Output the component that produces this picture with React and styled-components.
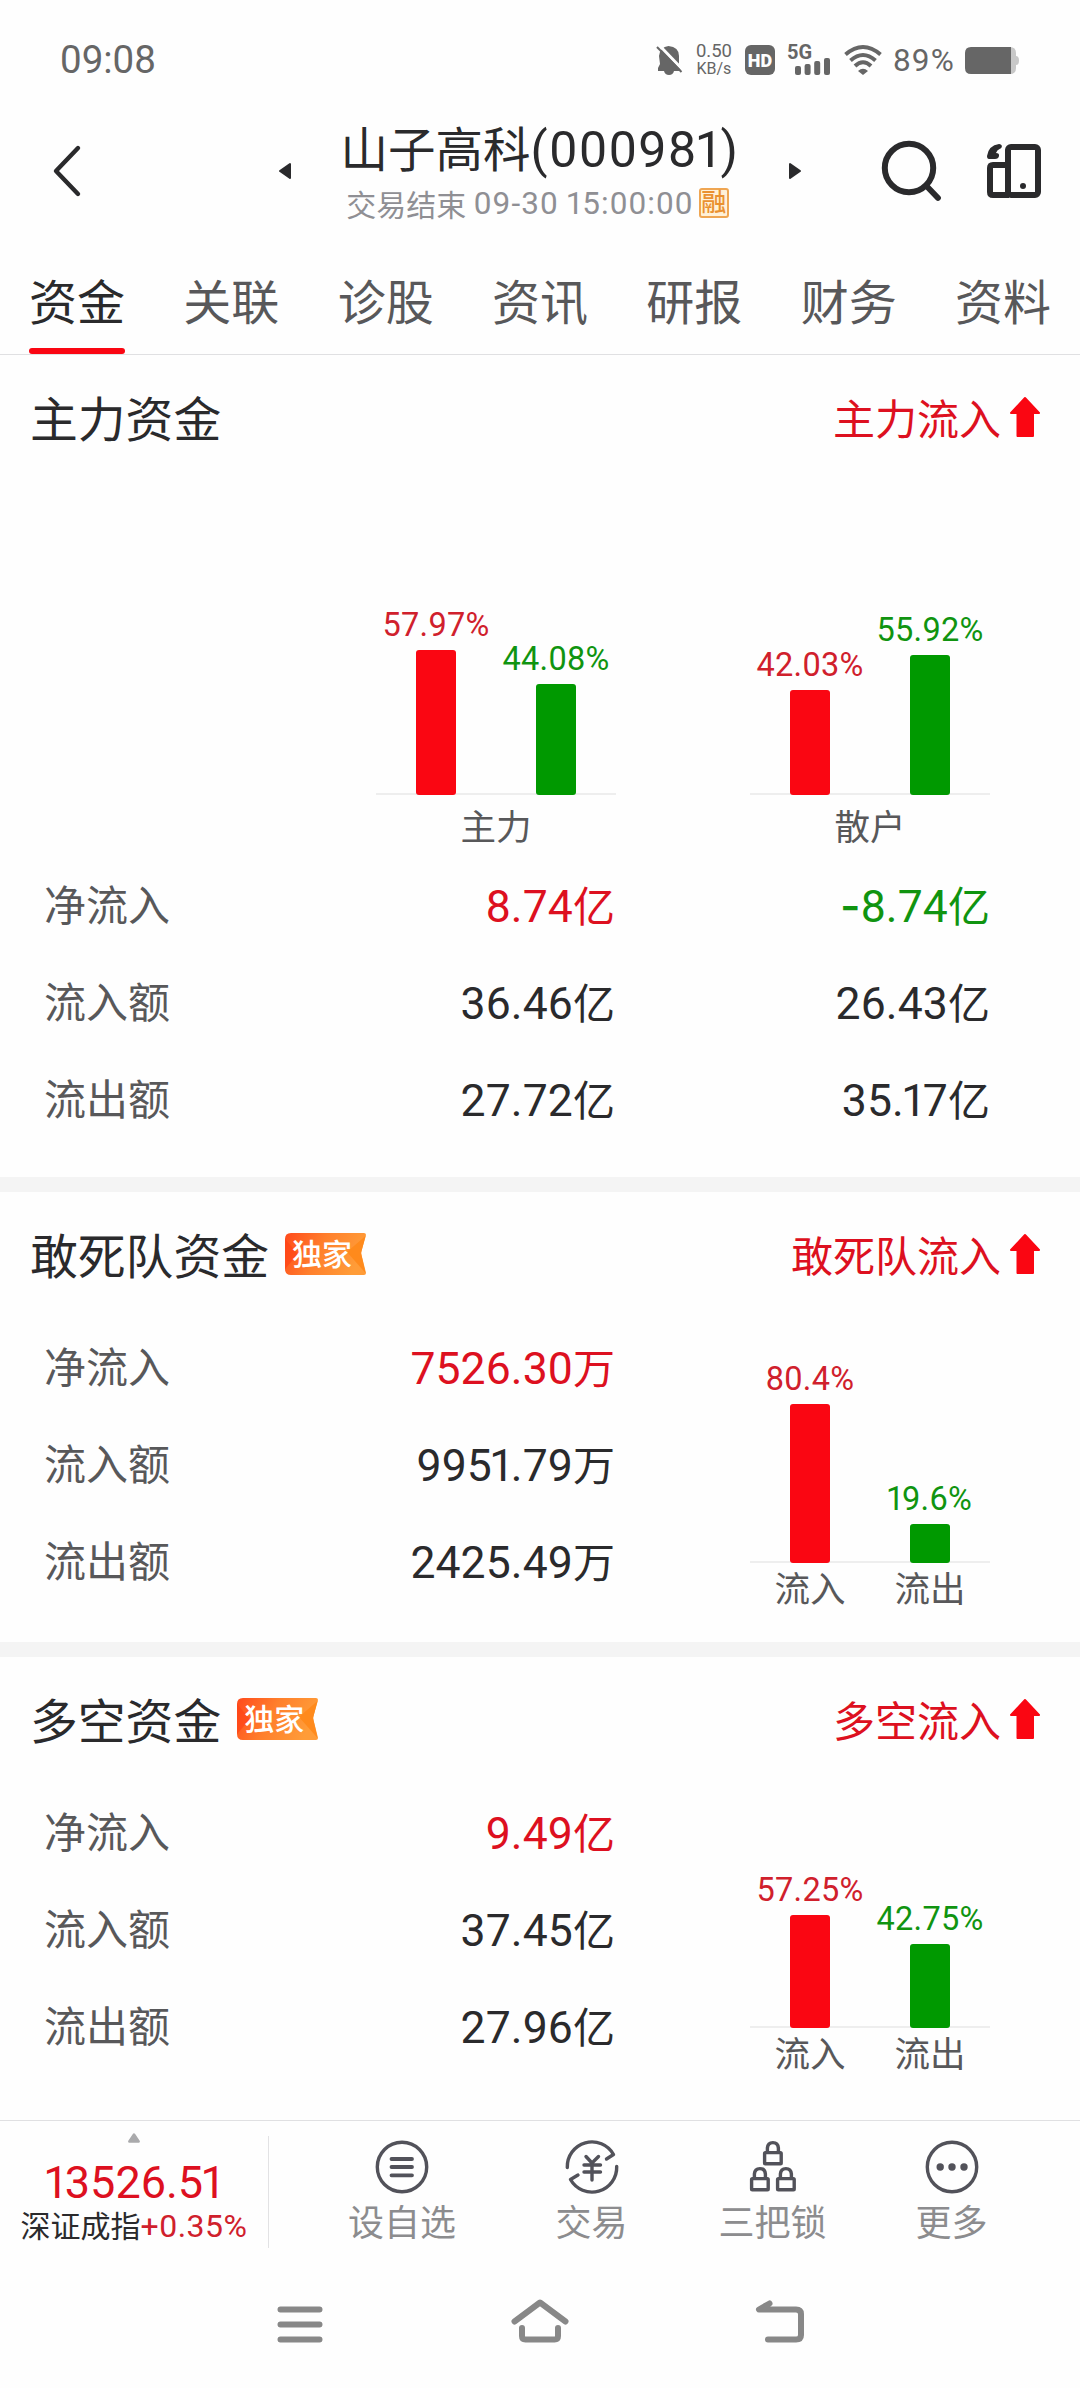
import React from "react";
import styled, { createGlobalStyle } from "styled-components";

const RED = "#dd1020";
const GREEN = "#109410";

const tabs = ["资金", "关联", "诊股", "资讯", "研报", "财务", "资料"];

const mainFunds = {
  title: "主力资金",
  trend: "主力流入",
  charts: [
    {
      label: "主力",
      bars: [
        { value: 57.97, color: "red" },
        { value: 44.08, color: "green" },
      ],
    },
    {
      label: "散户",
      bars: [
        { value: 42.03, color: "red" },
        { value: 55.92, color: "green" },
      ],
    },
  ],
  rows: [
    { label: "净流入", values: ["8.74", "-8.74"], tones: [RED, GREEN] },
    { label: "流入额", values: ["36.46", "26.43"], tones: [] },
    { label: "流出额", values: ["27.72", "35.17"], tones: [] },
  ],
};

const sections = [
  {
    title: "敢死队资金",
    trend: "敢死队流入",
    unit: "万",
    rows: [
      { label: "净流入", value: "7526.30", tone: RED },
      { label: "流入额", value: "9951.79" },
      { label: "流出额", value: "2425.49" },
    ],
    bars: [
      { value: 80.4, color: "red", label: "流入" },
      { value: 19.6, color: "green", label: "流出" },
    ],
  },
  {
    title: "多空资金",
    trend: "多空流入",
    unit: "亿",
    rows: [
      { label: "净流入", value: "9.49", tone: RED },
      { label: "流入额", value: "37.45" },
      { label: "流出额", value: "27.96" },
    ],
    bars: [
      { value: 57.25, color: "red", label: "流入" },
      { value: 42.75, color: "green", label: "流出" },
    ],
  },
];

// The digit 1 is narrower and the minus wider than the other figures
const Digits = ({ children }) =>
  children.split(/(1|^-)/).map((part, i) => {
    if (part === "1") return <One key={i}>1</One>;
    if (part === "-") return <Minus key={i}>-</Minus>;
    return part;
  });

const ArrowUp = () => (
  <svg width="32" height="42" viewBox="0 0 32 42">
    <path
      d="M16 2 L30 17 H24 V40 H8.5 V17 H2 Z"
      fill="#fa0612"
      stroke="#fa0612"
      strokeWidth="2"
      strokeLinejoin="round"
    />
  </svg>
);

const Exclusive = () => (
  <Ribbon>
    <svg width="81" height="42" viewBox="0 0 81 42">
      <defs>
        <linearGradient id="ribbon" x1="0" x2="1" y1="0" y2="0.25">
          <stop offset="0" stopColor="#ff4a1c" />
          <stop offset="0.5" stopColor="#ff7f2c" />
          <stop offset="1" stopColor="#ff9c38" />
        </linearGradient>
      </defs>
      <path
        d="M6 0 H79 Q81.5 0 80.8 3 L76.5 18 Q76 20 76.5 22 L80.8 39 Q81.5 42 79 42 H6 Q0 42 0 36 V6 Q0 0 6 0Z"
        fill="url(#ribbon)"
      />
      <path d="M0 6 L13 21 L0 36Z" fill="#ff4014" opacity="0.6" />
      <path d="M80.5 3 L62 19 L80.5 40 L76 20Z" fill="#ff8a1c" />
    </svg>
    <RibbonText>独家</RibbonText>
  </Ribbon>
);

const Bars = ({ bars, scale }) => (
  <BarArea>
    {bars.map((bar) => (
      <BarColumn key={bar.color}>
        <Percent $color={bar.color}>
          <Digits>{`${bar.value}%`}</Digits>
        </Percent>
        <Bar $color={bar.color} style={{ height: bar.value * scale }} />
      </BarColumn>
    ))}
  </BarArea>
);

const Heading = ({ title, trend, exclusive }) => (
  <SectionHead>
    <SectionTitle>{title}</SectionTitle>
    {exclusive && <Exclusive />}
    <Trend>
      {trend}
      <ArrowUp />
    </Trend>
  </SectionHead>
);

const StatusIcons = () => (
  <StatusRight>
    <svg width="28" height="32" viewBox="0 0 28 32">
      <path
        d="M4 12 Q5 3 13.5 2 Q24 3 24 12 V20 L26 27 H3 V24 L5 20Z"
        fill="#666"
      />
      <path d="M9 27 H19 Q18 31 14 31 Q10 31 9 27Z" fill="#666" />
      <path d="M4 1 L29 27" stroke="#fefefe" strokeWidth="3" />
      <path d="M2 3 L26.5 28" stroke="#666" strokeWidth="2" />
    </svg>
    <Speed>
      <span>0.50</span>
      <small>KB/s</small>
    </Speed>
    <Hd>HD</Hd>
    <Signal>
      <b>5G</b>
      <svg width="36" height="18" viewBox="0 0 36 18">
        <rect x="0" y="9" width="6" height="9" rx="2" fill="#666" />
        <rect x="9.6" y="7" width="6" height="11" rx="2" fill="#666" />
        <rect x="19.2" y="4" width="6" height="14" rx="2" fill="#666" />
        <rect x="29" y="1" width="6" height="17" rx="2" fill="#666" />
      </svg>
    </Signal>
    <svg width="38" height="30" viewBox="0 0 38 30" fill="none" stroke="#666" strokeWidth="4">
      <path d="M1.500 9.500 Q19 -5.500 36.500 9.500" />
      <path d="M6.500 15.500 Q19 4.500 31.500 15.500" />
      <path d="M11 21 Q19 13.500 27 21" />
      <path d="M14 26 Q19 21.500 24 26 L19 30Z" fill="#666" stroke="none" />
    </svg>
    <Battery>89%</Battery>
    <svg width="55" height="27" viewBox="0 0 55 27">
      <path d="M44 0 H45 Q51 0 51 6 V9 Q54 9 54 13.5 Q54 18 51 18 V21 Q51 27 45 27 H44Z" fill="#c8c8c8" />
      <path d="M6 0 H46 V27 H6 Q0 27 0 21 V6 Q0 0 6 0Z" fill="#666" />
    </svg>
  </StatusRight>
);

const lineIcon = {
  width: 56,
  height: 56,
  viewBox: "0 0 56 56",
  fill: "none",
  stroke: "#52525a",
  strokeWidth: 3.4,
  strokeLinecap: "round",
  strokeLinejoin: "round",
};

const Lock = ({ x, y }) => (
  <g transform={`translate(${x} ${y})`}>
    <rect x="1.6" y="11.6" width="16.6" height="11.2" rx="0.8" />
    <path d="M4.400 11 V7 Q4.800 1.600 9.900 1.600 Q15 1.600 15.400 7 V11" />
  </g>
);

const actions = [
  {
    label: "设自选",
    icon: (
      <svg {...lineIcon}>
        <circle cx="28" cy="28" r="24.7" />
        <path d="M17.500 20 H38 M17.500 28 H38 M17.500 36.300 H38" strokeWidth="3.8" />
      </svg>
    ),
  },
  {
    label: "交易",
    icon: (
      <svg {...lineIcon}>
        <path d="M3.300 28.500 A24.700 24.700 0 0 1 49.500 15.500 L42.500 20" />
        <path d="M52.700 27.500 A24.700 24.700 0 0 1 6.500 40.500 L14 36" />
        <path d="M22 17.500 L28 24 L34.500 17.500 M28 24 V41 M20 26 H36.500 M20 33 H36.500" />
      </svg>
    ),
  },
  {
    label: "三把锁",
    icon: (
      <svg {...lineIcon}>
        <Lock x={18} y={2} />
        <Lock x={5} y={28} />
        <Lock x={31} y={28} />
      </svg>
    ),
  },
  {
    label: "更多",
    icon: (
      <svg {...lineIcon}>
        <circle cx="28" cy="28" r="24.7" />
        <g fill="#52525a" stroke="none">
          <circle cx="16.2" cy="28" r="3.7" />
          <circle cx="28" cy="28" r="3.7" />
          <circle cx="40" cy="28" r="3.7" />
        </g>
      </svg>
    ),
  },
];

const App = () => {
  return (
    <Page>
      <GlobalStyle />
      <StatusBar>
        <Clock>09:08</Clock>
        <StatusIcons />
      </StatusBar>

      <Header>
        <HeaderSide>
          <svg width="32" height="56" viewBox="0 0 32 56" fill="none">
            <path d="M26 5 L4 28 L26 51" stroke="#2a2a2c" strokeWidth="4.4" strokeLinecap="round" strokeLinejoin="round" />
          </svg>
          <svg width="14" height="18" viewBox="0 0 14 18">
            <path d="M12 2 V16 L2 9Z" fill="#2a2a2c" stroke="#2a2a2c" strokeWidth="2" strokeLinejoin="round" />
          </svg>
        </HeaderSide>
        <StockInfo>
          <StockName>
            山子高科<Code><Digits>(000981)</Digits></Code>
          </StockName>
          <StockTime>
            交易结束&nbsp;<TimeDigits><Digits>09-30 15:00:00</Digits></TimeDigits>
            <MarginTag>融</MarginTag>
          </StockTime>
        </StockInfo>
        <HeaderSide>
          <svg width="14" height="18" viewBox="0 0 14 18">
            <path d="M2 2 V16 L12 9Z" fill="#2a2a2c" stroke="#2a2a2c" strokeWidth="2" strokeLinejoin="round" />
          </svg>
          <Tools>
            <svg width="64" height="66" viewBox="0 0 64 66" fill="none" stroke="#2a2a2c">
              <circle cx="29" cy="30" r="24.2" strokeWidth="6" />
              <path d="M46.500 48 L58 60" strokeWidth="5.8" strokeLinecap="round" />
            </svg>
            <svg width="54" height="54" viewBox="0 0 54 54" fill="none" stroke="#2a2a2c">
              <rect x="21" y="3" width="30" height="48" rx="3" strokeWidth="6" />
              <path d="M21 21 H6 Q3 21 3 24 V48 Q3 51 6 51 H22" strokeWidth="6" />
              <circle cx="36" cy="42" r="3" fill="#2a2a2c" stroke="none" />
              <path
                d="M12 0 C15.500 0 16 4 12.500 5 Q10 6 9 9 Q12.500 9 12 12 Q11.500 15 8 15 H2 Q0 15 0 12 Q1.500 1.500 12 0Z"
                fill="#2a2a2c"
                stroke="none"
              />
            </svg>
          </Tools>
        </HeaderSide>
      </Header>

      <Tabs>
        {tabs.map((tab, i) => (
          <Tab key={tab} $active={i === 0}>
            {tab}
          </Tab>
        ))}
      </Tabs>

      <MainSection>
        <Heading title={mainFunds.title} trend={mainFunds.trend} />
        <ChartRow>
          {mainFunds.charts.map((chart) => (
            <Chart key={chart.label}>
              <Bars bars={chart.bars} scale={2.51} />
              <ChartLabels>
                <span>{chart.label}</span>
              </ChartLabels>
            </Chart>
          ))}
        </ChartRow>
        {mainFunds.rows.map((row) => (
          <Row key={row.label}>
            <RowLabel>{row.label}</RowLabel>
            {row.values.map((value, i) => (
              <Amount key={value} $tone={row.tones[i]}>
                <Digits>{value}</Digits>
                <Unit>亿</Unit>
              </Amount>
            ))}
          </Row>
        ))}
      </MainSection>

      {sections.map((section) => (
        <Section key={section.title}>
          <Heading title={section.title} trend={section.trend} exclusive />
          <SplitBody>
            <div>
              {section.rows.map((row) => (
                <Row key={row.label} $raised>
                  <RowLabel>{row.label}</RowLabel>
                  <Amount $tone={row.tone}>
                    <Digits>{row.value}</Digits>
                    <Unit>{section.unit}</Unit>
                  </Amount>
                </Row>
              ))}
            </div>
            <SideChart>
              <Bars bars={section.bars} scale={1.973} />
              <ChartLabels $tight>
                {section.bars.map((bar) => (
                  <span key={bar.label}>{bar.label}</span>
                ))}
              </ChartLabels>
            </SideChart>
          </SplitBody>
        </Section>
      ))}

      <BottomBar>
        <IndexBox>
          <svg width="12" height="10" viewBox="0 0 12 10">
            <path d="M6 1.500 L10.700 8.500 H1.300Z" fill="#aaaaac" stroke="#aaaaac" strokeWidth="2.4" strokeLinejoin="round" />
          </svg>
          <IndexValue>
            <Digits>13526.51</Digits>
          </IndexValue>
          <IndexName>
            深证成指<em>+0.35%</em>
          </IndexName>
        </IndexBox>
        <Actions>
          {actions.map((action) => (
            <Action key={action.label}>
              {action.icon}
              {action.label}
            </Action>
          ))}
        </Actions>
      </BottomBar>

      <NavBar>
        <svg width="60" height="50" viewBox="0 0 60 50">
          <path d="M10.500 9.500 H49.500 M10.500 24.500 H49.500 M10.500 39.500 H49.500" />
        </svg>
        <svg width="60" height="50" viewBox="0 0 60 50">
          <path d="M4.500 21.500 L30 2.500 L55.500 21.500" />
          <path d="M12 28 V36 Q12 39.500 15.500 39.500 H44.500 Q48 39.500 48 36 V28" />
        </svg>
        <svg width="60" height="50" viewBox="0 0 60 50">
          <path d="M19.500 3.500 L9 9.500 H46 Q51 9.500 51 14 V35 Q51 39.500 46 39.500 H18" />
        </svg>
      </NavBar>
    </Page>
  );
};

export default App;

const GlobalStyle = createGlobalStyle`
  * {
    box-sizing: border-box;
  }

  body {
    margin: 0;
    background: #fefefe;
  }

  svg {
    display: block;
    flex: none;
    overflow: visible;
  }
`;

const Page = styled.div`
  display: flex;
  flex-direction: column;
  width: 1080px;
  height: 2388px;
  overflow: hidden;
  background: #fefefe;
  color: #2a2a2c;
  font-family: Roboto, "Noto Sans CJK SC", sans-serif;
`;

const One = styled.span`
  margin: 0 -0.08em 0 -0.06em;
`;

const Minus = styled.span`
  font-family: Inter, sans-serif;
  font-weight: 500;
`;

const StatusBar = styled.div`
  display: flex;
  align-items: center;
  justify-content: space-between;
  height: 118px;
  padding: 2px 60px 0;
  color: #666;
`;

const Clock = styled.span`
  font-size: 38.5px;
  line-height: 40px;
`;

const StatusRight = styled.div`
  display: flex;
  align-items: center;
`;

const Speed = styled.div`
  display: flex;
  flex-direction: column;
  align-items: center;
  width: 38px;
  margin-left: 12px;
  font-size: 18.5px;
  line-height: 17px;

  small {
    font-size: 16px;
  }
`;

const Hd = styled.span`
  width: 30px;
  height: 30px;
  margin: 0 12px 0 12px;
  border-radius: 6px;
  background: #666;
  color: #fefefe;
  font-size: 18px;
  font-weight: 900;
  line-height: 31px;
  text-align: center;
`;

const Signal = styled.div`
  display: flex;
  flex-direction: column;
  width: 44px;
  height: 30px;
  margin-right: 13px;

  b {
    height: 12px;
    font-size: 20px;
    line-height: 15px;
  }

  svg {
    align-self: flex-end;
  }
`;

const Battery = styled.span`
  margin: 2px 10px 0 11px;
  font-size: 31.5px;
  line-height: 32px;
  letter-spacing: 1.2px;
`;

const Header = styled.div`
  display: grid;
  grid-template-columns: 292px 1fr 292px;
  height: 131px;
`;

const HeaderSide = styled.div`
  display: flex;
  align-items: center;
  justify-content: space-between;
  height: 106px;

  &:first-child {
    padding-left: 52px;
  }

  &:last-child {
    padding: 0 39px 0 0;
  }
`;

const Tools = styled.div`
  display: flex;
  align-items: center;
  gap: 43px;
`;

const StockInfo = styled.div`
  display: flex;
  flex-direction: column;
  align-items: center;
`;

const StockName = styled.div`
  height: 61px;
  font-size: 47.5px;
  line-height: 65px;
  white-space: nowrap;
`;

const Code = styled.span`
  font-size: 50px;
  letter-spacing: 1.6px;
`;

const StockTime = styled.div`
  display: flex;
  align-items: center;
  height: 48px;
  padding-right: 5px;
  color: #8f8f94;
  font-size: 30px;
  white-space: nowrap;
`;

const TimeDigits = styled.span`
  font-size: 31.5px;
  letter-spacing: 1.1px;
`;

const MarginTag = styled.span`
  width: 30px;
  height: 30px;
  margin-left: 5px;
  border: 2px solid #efa653;
  border-radius: 3px;
  background: #fff1d8;
  color: #ea9130;
  font-size: 25px;
  font-weight: 500;
  line-height: 26px;
  text-align: center;
`;

const Tabs = styled.div`
  display: flex;
  justify-content: space-between;
  height: 106px;
  padding: 0 29px;
  border-bottom: 1px solid #e0e0e2;
`;

const Tab = styled.span`
  height: 105px;
  color: ${(props) => (props.$active ? "#2a2a2c" : "#58585a")};
  font-size: 48px;
  line-height: 109px;
  position: relative;

  &::after {
    content: "";
    display: ${(props) => (props.$active ? "block" : "none")};
    position: absolute;
    left: 0;
    bottom: 0;
    width: 96px;
    height: 6px;
    border-radius: 3px;
    background: #fa0612;
  }
`;

const Section = styled.section`
  height: 465px;
  border-top: 15px solid #f4f4f4;
`;

const MainSection = styled.section`
  height: 822px;
`;

const SectionHead = styled.div`
  display: flex;
  align-items: center;
  height: 128px;
  padding: 3px 39px 0 30px;
`;

const SectionTitle = styled.h2`
  margin: 0 16px 0 0;
  font-size: 47.8px;
  font-weight: 400;
  line-height: 60px;
`;

const Ribbon = styled.span`
  display: grid;
  margin-top: -5px;

  > * {
    grid-area: 1 / 1;
  }
`;

const RibbonText = styled.span`
  padding-left: 7px;
  color: #fff;
  font-size: 30px;
  font-weight: 500;
  line-height: 44px;
`;

const Trend = styled.div`
  display: flex;
  align-items: center;
  gap: 8px;
  margin-left: auto;
  color: ${RED};
  font-size: 42px;
  line-height: 60px;

  svg {
    margin-top: -7px;
  }
`;

const ChartRow = styled.div`
  display: flex;
  justify-content: flex-end;
  gap: 134px;
  height: 374px;
  padding-right: 90px;
`;

const Chart = styled.div`
  display: flex;
  flex-direction: column;
  justify-content: flex-end;
  width: 240px;
`;

const SideChart = styled(Chart)`
  height: 294px;
  margin-right: 90px;
`;

const BarArea = styled.div`
  display: flex;
  align-items: flex-end;
  background: linear-gradient(#eeeeee, #eeeeee) bottom / 100% 2px no-repeat;
`;

const BarColumn = styled.div`
  display: flex;
  flex-direction: column;
  align-items: center;
  width: 120px;
`;

const Percent = styled.span`
  margin-bottom: 7px;
  color: ${(props) => (props.$color === "red" ? "#d0202c" : GREEN)};
  font-size: 32.5px;
  letter-spacing: 0.3px;
  line-height: 36px;
`;

const Bar = styled.div`
  width: 40px;
  border-radius: 3px;
  background: ${(props) => (props.$color === "red" ? "#fa0612" : "#009900")};
`;

const ChartLabels = styled.div`
  display: flex;
  justify-content: space-around;
  height: ${(props) => (props.$tight ? "51px" : "62px")};
  color: #58585a;
  font-size: 35.5px;
  line-height: ${(props) => (props.$tight ? "54px" : "66px")};
`;

const SplitBody = styled.div`
  display: flex;
  justify-content: space-between;
`;

const Row = styled.div`
  display: flex;
  align-items: center;
  height: 97px;
  padding: ${(props) => (props.$raised ? "1px" : "3px")} 0 0 44px;
  line-height: 60px;
`;

const RowLabel = styled.span`
  width: 196px;
  color: #58585a;
  font-size: 42px;
`;

const Amount = styled.span`
  width: 375px;
  color: ${(props) => props.$tone || "#2a2a2c"};
  font-size: 44.5px;
  letter-spacing: 0.1px;
  text-align: right;
`;

const Unit = styled.span`
  font-size: 42px;
`;

const BottomBar = styled.div`
  display: flex;
  flex: none;
  height: 148px;
  margin-top: 13px;
  border-top: 1px solid #e0e0e2;
`;

const IndexBox = styled.div`
  display: flex;
  flex-direction: column;
  align-items: center;
  width: 269px;
  height: 112px;
  margin-top: 15px;
  border-right: 1px solid #e2e2e4;

  > svg {
    margin-top: -3px;
  }
`;

const IndexValue = styled.div`
  margin-top: 16px;
  color: ${RED};
  font-size: 45px;
  line-height: 48px;
`;

const IndexName = styled.div`
  font-size: 30px;
  line-height: 39px;
  white-space: nowrap;

  em {
    color: #d0202c;
    font-size: 32px;
    font-style: normal;
    letter-spacing: 0.5px;
  }
`;

const Actions = styled.div`
  display: grid;
  grid-template-columns: 190px 189px 173px 185px;
  margin-left: 38px;
`;

const Action = styled.div`
  display: flex;
  flex-direction: column;
  align-items: center;
  padding-top: 18px;
  color: #8c8c8e;
  font-size: 36px;
  line-height: 59px;
`;

const NavBar = styled.nav`
  display: flex;
  justify-content: space-between;
  padding: 32px 270px 0;

  path {
    fill: none;
    stroke: #888;
    stroke-width: 6px;
    stroke-linecap: round;
    stroke-linejoin: round;
  }
`;
